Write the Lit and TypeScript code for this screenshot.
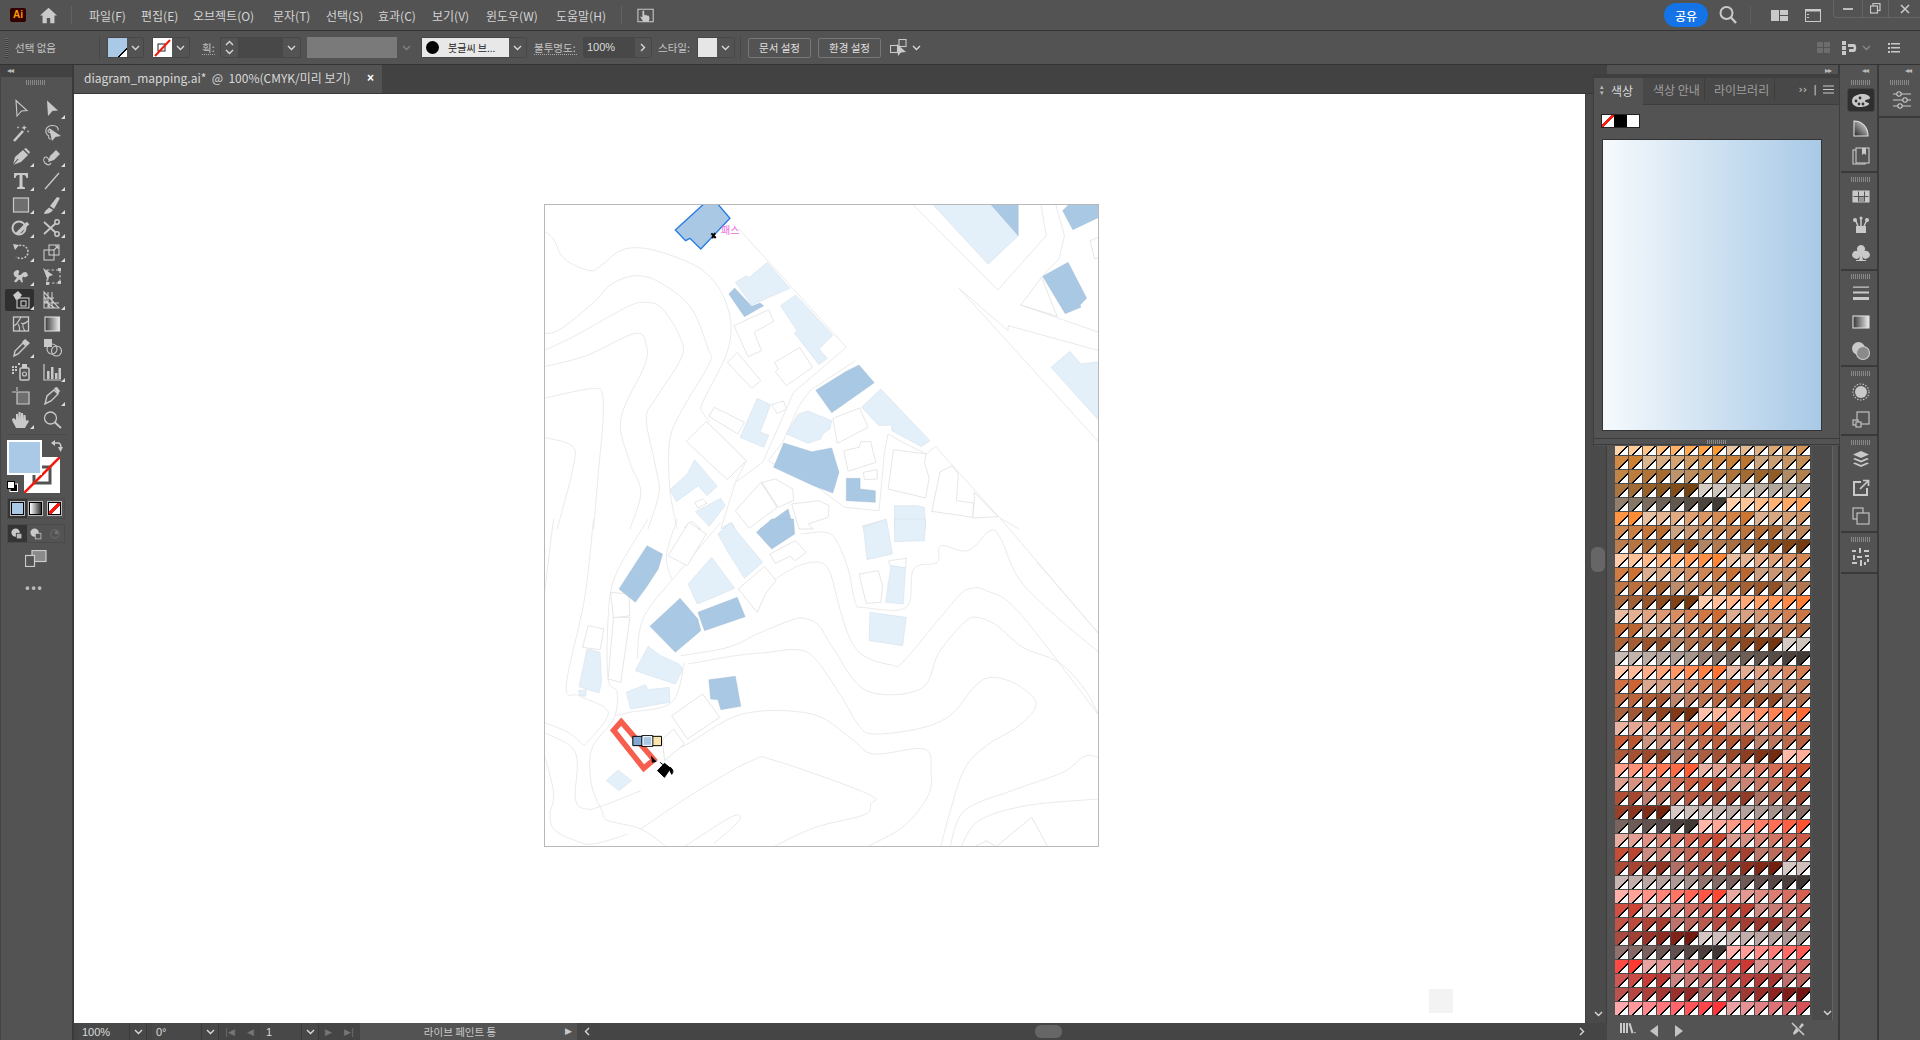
import { LitElement, html, css, svg, TemplateResult } from "lit";
import { customElement } from "lit/decorators.js";

type P = number[];
const smooth = (p: P): string => {
  const pts: [number, number][] = [];
  for (let i = 0; i < p.length; i += 2) pts.push([p[i], p[i + 1]]);
  let d = `M${pts[0][0]} ${pts[0][1]}`;
  for (let i = 0; i < pts.length - 1; i++) {
    const a = pts[Math.max(i - 1, 0)], b = pts[i], c = pts[i + 1], e = pts[Math.min(i + 2, pts.length - 1)];
    d += `C${b[0] + (c[0] - a[0]) / 6} ${b[1] + (c[1] - a[1]) / 6} ${c[0] - (e[0] - b[0]) / 6} ${c[1] - (e[1] - b[1]) / 6} ${c[0]} ${c[1]}`;
  }
  return d;
};

const A_dark = [
  "1240,13 1318,13 1318,110", "1440,35 1460,13 1540,13 1540,55 1468,92",
  "1385,232 1455,190 1506,298 1488,318 1490,325 1447,344", "522,285 538,267 585,322 608,312 618,320 565,353",
  "761,574 845,517 880,498 922,551 805,641", "645,805 673,732 750,758 805,747 825,820 808,882 755,860",
  "845,838 883,838 883,870 925,875 925,910 845,905", "608,990 685,930 700,990",
];
const A_light = [
  "1080,13 1240,13 1318,110 1235,196", "540,250 570,230 577,236 628,190 690,268 585,318",
  "664,320 706,288 808,408 770,450 793,478 770,497 715,420 702,402 710,396",
  "887,625 940,570 1075,725 1052,743 970,695 970,678 935,680", "600,598 637,617 608,700 632,708 618,745 553,715",
  "680,705 713,645 740,636 805,665 800,690 780,705 775,720 740,733", "360,872 408,825 428,782 490,862 462,890 438,860 378,908",
  "430,938 500,898 512,920 468,982", "1408,505 1460,457 1490,495 1540,488 1540,665",
  "978,920 1040,920 1060,925 1063,990 978,990", "890,980 952,962 957,990 892,990", "505,985 530,970 540,990 505,990",
];
const A_out = [
  "536,380 632,332 645,367 592,400 612,455 575,473", "518,490 545,460 610,545 585,568",
  "648,490 680,470 717,445 752,505 680,560 650,518 658,510", "808,658 882,627 905,685 820,733",
  "838,755 880,745 885,728 912,728 926,790 850,817", "405,727 460,667 570,785 518,842", "467,652 482,625 565,670 547,705",
  "640,617 672,606 681,630 655,644", "892,820 930,812 930,840 895,842", "960,870 975,752 1065,765 1060,790 1073,838 1063,897",
  "1080,937 1103,818 1137,800 1153,826 1148,905 1195,912 1193,955", "1193,957 1197,905 1197,880 1262,953", "1325,318 1382,235 1425,352",
  "540,935 610,850 655,925 578,988", "613,850 650,840 698,870 700,905 658,925", "695,915 770,905 798,920 795,955 740,975 755,990 715,990",
  "1515,125 1540,115 1540,175 1528,180", "428,910 450,900 462,912 437,928", "400,985 420,967 445,990",
];
const A_curves: P[] = [
  [13,95,40,120,70,180,140,215,170,200,230,152,310,152,430,200,490,260,520,330,528,400,510,480,450,610,450,640,470,670],
  [13,405,60,390,150,310,200,255,270,230,340,255,420,330,465,450,470,490,400,620,360,720,360,870,380,990],
  [13,455,100,410,240,325,295,310,340,330,390,420,390,480,320,600,295,660,320,800,330,880,300,990],
  [13,503,130,470,265,403,295,440,290,500,225,660,250,790,280,880,250,990],
  [13,598,150,568,175,590,175,680,165,800,150,990], [13,715,90,740,95,800,50,990],
];
const A_lines = [
  "550,90 845,445 700,580 660,680 615,790 540,850 500,990", "870,485 745,575 715,620 670,730 630,785 760,860 840,925 935,935 950,760 960,705 1000,730 1065,765 1090,742",
  "1090,742 1265,955 1320,990", "1025,13 1262,273 1395,110 1380,13", "1155,268 1290,395 1290,380 1540,455", "1155,268 1540,730",
  "1420,13 1445,110 1430,180 1385,230", "1325,318 1540,400", "460,667 570,785 540,850",
];
const B_dark = [
  "220,210 297,80 340,105 328,150 295,205 265,250", "305,322 388,238 437,300 445,335 375,400", "437,280 545,235 567,293 455,335",
  "467,482 540,472 555,562 500,572 492,542 472,540", "598,40 640,0 700,0 703,45 640,90",
];
const B_light = [
  "492,45 525,12 615,130 565,178 520,100", "410,195 475,115 538,208 470,240 435,255", "265,455 300,382 335,410 385,435 395,450 375,495",
  "240,520 292,497 300,512 358,505 360,550 252,570", "110,503 132,390 168,400 172,490 165,522", "108,515 130,512 128,532 112,530",
  "185,785 217,753 255,785 220,815", "892,25 955,0 972,105 902,122", "953,250 968,140 1008,147 1002,255", "910,280 1010,295 1000,380 908,365",
  "978,0 1063,0 1060,65 978,68",
];
const B_out = [
  "355,110 412,10 460,45 408,140", "197,220 247,225 250,290 205,297", "190,480 205,295 250,295 225,490", "120,385 135,320 178,330 168,392",
  "365,590 450,525 497,595 408,660", "340,660 370,630 400,675 345,725", "635,105 705,65 735,100 705,125 690,112 650,133",
  "548,210 620,142 652,185 625,220 600,280", "880,165 933,155 945,200 940,250 900,253", "962,125 1010,118 1008,147 965,140",
  "1255,985 1310,935 1355,895 1400,985", "1195,985 1230,965 1260,985",
];
const B_curves: P[] = [
  [640,195,650,180,715,140,770,130,800,160,830,280,860,370,900,415,970,438,1000,430,1100,300,1160,225,1190,208,1230,215,1320,280,1540,590],
  [390,410,520,385,600,345,690,305,730,298,770,320,810,390,900,515,1050,510,1100,400,1170,310,1205,295,1260,320,1330,385,1430,430,1500,510,1540,590],
  [410,435,540,410,630,400,710,392,760,420,830,530,880,620,920,645,1040,630,1130,590,1200,500,1250,475,1320,500,1367,555,1320,620,1230,680,1170,750,1130,880,1105,983],
  [340,700,400,680,560,585,750,585,860,660,920,705,1060,690,1078,760,1070,830,1005,920,900,985],
  [280,930,430,820,585,725,650,725,905,825,912,855,893,888,760,925,645,983],
  [400,983,530,893,550,905,480,975], [175,880,190,905,280,930,350,983], [30,880,40,930,100,965,150,975,245,945],
  [1160,983,1210,905,1340,860,1540,840], [1540,715,1500,712,1440,760,1300,815,1170,875,1130,983],
  [720,45,790,40,820,70,850,150,870,250,890,265,1010,265,1030,150,1095,130,1105,80,1180,95,1240,35,1270,60,1320,180,1420,290,1540,400],
  [150,0,125,240,75,500,110,530,180,565,185,600,125,680], [300,0,210,170,190,300,190,480,215,520,205,600,145,690,145,800,175,880],
  [13,610,80,640,125,680], [13,640,100,700,100,840,130,870,175,860,280,815], [13,700,40,820,30,880], [40,0,13,240],
  [1270,0,1540,345], [1370,130,1540,345], [500,10,400,140,290,290,270,420], [400,430,365,550,250,580,210,590],
  [380,0,350,110,365,180],
];

const shapes = (d: string[], c: string) => d.map((p) => svg`<polygon class=${c} points=${p}></polygon>`);
const curves = (d: P[]) => d.map((p) => svg`<path class="ln" d=${smooth(p)}></path>`);
const lines = (d: string[]) => d.map((p) => svg`<polyline class="ln" points=${p}></polyline>`);

/* swatch colours, generated in the library's order */
const series: [number[], number[]][] = [
  [[100, 83], [100, 60]], [[60, 77], [60, 50]], [[50, 71], [58, 46]], [[42, 65], [55, 42]], [[38, 58], [58, 36]], [[32, 54], [75, 26]],
  [[18, 80], [12, 60]], [[14, 50], [10, 23]],
];
const swatchColors = (): string[] => {
  const cycles: [number, number][] = [[64, 30], [48, 26], [48, 24], [64, 22], [48, 19], [48, 16], [64, 12], [64, 9], [64, 6], [48, 2], [48, 358]];
  const out: string[] = [];
  for (const [len, h] of cycles) {
    for (let s = 0; s < len / 8; s++) {
      const [a, b] = series[s];
      for (let i = 0; i < 8; i++) {
        const t = i / 7;
        out.push(`hsl(${h},${a[0] + (b[0] - a[0]) * t}%,${a[1] + (b[1] - a[1]) * t}%)`);
      }
    }
  }
  return out.slice(0, 574);
};

const ic = (s: TemplateResult, size = 20) => html`<svg class="ic" viewBox="0 0 20 20" width=${size} height=${size}>${s}</svg>`;
const chev = html`<svg class="chev" viewBox="0 0 9 6" width="9" height="6"><path d="M1 1L4.5 4.5 8 1"></path></svg>`;

const tools: [TemplateResult, boolean][] = [
  [svg`<path d="M5 1.5L16 11.5 10.5 12 6 17Z"/>`, false],
  [svg`<path class="f" d="M5 1.5L16 11.5 10.5 12 6 17Z"/>`, true],
  [svg`<path d="M3 18L12 8" stroke-width="2.6"/><path class="f" d="M13 2l1 2 2 .5-2 1-.6 2-1-2-2-.5 2-1zM17 7l.5 1 1 .4-1 .4-.5 1-.4-1-1-.4 1-.4zM7 3l.5 1 1 .4-1 .4-.5 1-.4-1-1-.4 1-.4z"/>`, false],
  [svg`<path d="M7 13C2 10 3 3 10 2.5c5-.3 7 3 6 5M7 13c-1 2 0 3 2 3"/><circle cx="7.5" cy="8" r="1.5"/><path class="f" d="M7 5L19 13 13.500 14 10 18Z"/>`, false],
  [svg`<path class="f" d="M2 18L4 10 12 3 17 8 10 15Z"/><path class="f" d="M13 2l2-1 4 4-1 2z"/><path d="M2 18L7 12" stroke="#535353"/>`, true],
  [svg`<path class="f" d="M6 15L8 9 14 3 18 7 12 13Z"/><path d="M7 13C3 6 0 13 3 16s5 2 6 0"/>`, true],
  [svg`<path class="f" d="M3 2H17V7H15.500C15 4.500 14 4 11.500 4V15.500L14 16.500V18H6V16.500L8.500 15.500V4C6 4 5 4.500 4.500 7H3Z"/>`, true],
  [svg`<path d="M3 18L17 2" stroke-width="1.3"/>`, true],
  [svg`<rect class="f2" x="2.500" y="3" width="15" height="14"/>`, true],
  [svg`<path class="f" d="M2 19C3 15 5 15 7 12.500L11 15C9 18 5 19 2 19ZM8 11L15 2 18 3 12 14Z"/>`, true],
  [svg`<circle cx="8" cy="10" r="6.500" stroke-width="2"/><path d="M6 16L17 5" stroke-width="3.600"/>`, true],
  [svg`<circle cx="15" cy="4" r="2.200" stroke-width="1.500"/><circle cx="15" cy="16" r="2.200" stroke-width="1.500"/><path d="M2 4L13.500 14.500M2 16L13.500 5.500" stroke-width="1.800"/>`, true],
  [svg`<path d="M5 5C10 1 17 4 17 10S10 18 5 15" stroke-dasharray="2 1.500" stroke-width="1.500"/><path class="f" d="M2 2L8 3 4 8Z"/>`, true],
  [svg`<rect x="2" y="8" width="10" height="10"/><rect x="7" y="3" width="10" height="10"/><path d="M12 8L16 4M13 4H16V7"/>`, true],
  [svg`<path class="f" d="M3 6c2-2 4-3 5-1s-2 3 0 4 3-3 6-3 2 3 3 3-2 3-4 2-2 2-1 5l-2 .5c0-2-1-3-2-3l-3 3-2-1 3-4C3 11 2 8 3 6Z"/>`, true],
  [svg`<path class="f" d="M1 2L11 9 7 10.500 6 15Z"/><rect x="5" y="4" width="13" height="13" stroke-dasharray="2.500 2"/><path class="f" d="M4 16h3v3H4zM16 2h3v3h-3zM16 15h3v3h-3z"/>`, false],
  [svg`<path class="f" d="M2 5L7 1 11 5 8 9 5 10Z"/><rect x="6" y="8" width="12" height="10"/><rect x="10" y="11" width="5" height="5" fill="#2f2f2f"/>`, true],
  [svg`<path d="M2 2V18H17L2 2ZM2 6L8 18M2 11L13 18M6 2V18M10 2V18M2 8H12M2 13H17"/>`, true],
  [svg`<rect x="2.500" y="3" width="15" height="14" stroke-width="1.300"/><path d="M3 12C7 10 8 6 10 3M10 9C13 11 15 9 17 7M7 10C9 13 9 15 8 17M12 10C11 13 13 15 14 17" />`, false],
  [svg`<defs><linearGradient id="tg"><stop offset="0" stop-color="#3a3a3a"/><stop offset="1" stop-color="#eee"/></linearGradient></defs><rect x="3" y="3" width="14.500" height="14" fill="url(#tg)" stroke="#ddd"/>`, false],
  [svg`<path d="M3 18L4 13 12 5 15 8 7 16Z" stroke-width="1.400"/><path class="f" d="M11 4L14 1 19 5 16 8Z"/>`, true],
  [svg`<path class="f" d="M2 1h8v8H2z"/><circle cx="10" cy="11" r="5"/><circle cx="14.500" cy="13" r="5"/>`, false],
  [svg`<path class="f" d="M1 4h2v2H1zM4 4h2v2H4zM1 7h2v2H1zM4 7h2v2H4zM7 1h2v2H7zM1 10h2v2H1z"/><rect x="9" y="6" width="9" height="12" rx="1" stroke-width="1.500"/><path class="f" d="M11 2h5v4h-5z"/><circle cx="13.500" cy="12" r="2"/>`, false],
  [svg`<path d="M2 2V18H19" stroke-width="1.200"/><path class="f" d="M5 9h2.500v8H5zM9 5h2.500v12H9zM13 11h2.500v6H13zM16.500 6H19v11h-2.500z"/>`, true],
  [svg`<path d="M6 1V5M1 6H5" /><path class="f2" d="M6 6H18V18H6Z"/>`, false],
  [svg`<path d="M3 18L5 10 12 4 16 8 9 15Z" stroke-width="1.400"/><path class="f" d="M12 2L15 1 18 5 16 8Z"/>`, true],
  [svg`<path class="f" d="M5 18C4 15 1 12 1 9l2-1 2 2V4h2l.500 5V2h2l.500 7V3h2l.500 7V5h2l.500 6 1-1 2 1c-1 2-3 5-4 7Z"/>`, true],
  [svg`<circle cx="8.500" cy="8" r="6" stroke-width="1.300"/><path d="M13 12.500L19 18" stroke-width="1.800"/>`, false],
];

const dock: [number, TemplateResult][] = [
  [100, svg`<path class="f" fill-rule="evenodd" d="M1 11C1 6 7 4 11 4c5 0 8 2 8 4 0 2-5 1-5 3s5 1 4 3-5 3-9 3-8-2-8-6Z"/><g fill="#333" stroke="none"><circle cx="5" cy="11" r="1.400"/><circle cx="8" cy="14" r="1.400"/><circle cx="12" cy="14" r="1.400"/><circle cx="9" cy="8" r="1.400"/></g>`],
  [128, svg`<defs><linearGradient id="dg" x1="0" y1="1" x2="1" y2="0"><stop offset="0" stop-color="#222"/><stop offset="1" stop-color="#eee"/></linearGradient></defs><path d="M3 3C11 3 17 9 17 18H3Z" fill="url(#dg)" stroke="#ddd"/>`],
  [156, svg`<rect x="2" y="4" width="12" height="14"/><rect x="5" y="2" width="13" height="15" fill="#535353"/><path class="f" d="M11 2h4v7l-2-1.500L11 9Z"/>`],
  [197, svg`<path class="f" d="M2 4h5v5H2zM8 4h5v5H8zM14 4h4v5h-4zM2 10h5v5H2zM14 10h4v5h-4z"/><path d="M2 4H18V15H2Z"/><path d="M8 10h5v5H8z" fill="#999" stroke="none"/>`],
  [225, svg`<path class="f" d="M5 11H15V18H5Z"/><path d="M7 11L4 4M10 11V2M13 11L16 5" stroke-width="1.500"/><circle class="f" cx="4" cy="5" r="2"/><circle class="f" cx="16" cy="5" r="2"/><circle class="f" cx="10" cy="3" r="1.500"/>`],
  [253, svg`<path class="f" d="M10 2a4 4 0 0 1 3.500 6 4 4 0 1 1-2.500 5l1 4h3v1H5v-1h3l1-4a4 4 0 1 1-2.500-5A4 4 0 0 1 10 2Z"/>`],
  [293, svg`<path class="f" d="M2 3.500h16v1.200H2zM2 8.500h16v2H2zM2 14h16v3H2z"/>`],
  [322, svg`<defs><linearGradient id="dh"><stop offset="0" stop-color="#333"/><stop offset="1" stop-color="#eee"/></linearGradient></defs><rect x="2" y="4" width="16" height="12" fill="url(#dh)" stroke="#ddd"/>`],
  [351, svg`<circle class="f" cx="7.500" cy="7.500" r="6.500"/><circle cx="12" cy="12" r="6.500" fill="#8a8a8a" stroke="#ccc"/>`],
  [392, svg`<circle class="f" cx="10" cy="10" r="6"/><circle cx="10" cy="10" r="8" stroke-dasharray="1.500 1.500"/>`],
  [419, svg`<rect x="6" y="3" width="12" height="12"/><rect x="2" y="11" width="5" height="5" fill="#535353"/><rect x="5" y="13" width="5" height="5" fill="#535353"/>`],
  [460, svg`<path class="f" d="M10 8L2 4.500 10 1l8 3.500ZM2 9l2-1 6 2.600L16 8l2 1-8 3.500ZM2 13.500l2-1 6 2.600 6-2.600 2 1L10 17Z"/>`],
  [488, svg`<path d="M10 4H3V17H16V10" stroke-width="2"/><path d="M9 11L17 3M12 2.500H17.500V8" stroke-width="1.700"/>`],
  [516, svg`<rect x="2" y="2" width="10" height="11"/><rect x="6" y="7" width="12" height="11" fill="#535353"/>`],
  [557, svg`<path class="f" d="M1 3h4v2H1zM8 1h2v5H8zM13 3h5v2h-5zM2 8h2v5H2zM6 9h5v2H6zM14 8h4v2h-4zM1 15h5v2H1zM9 13h2v6H9zM13 15h2v3h-2zM16 12h2v3h-2z"/>`],
];
const dockSections: [number, number][] = [[65, 108], [174, 97], [272, 95], [368, 68], [437, 96], [534, 40]];
const grips = [82, 179, 276, 373, 442, 539];

@customElement("app-root")
export class AppRoot extends LitElement {
  static styles = css`
    :host { display: block; width: 1920px; height: 1040px; overflow: hidden; position: relative; background: #535353; color: #cfcfcf;
      font: 11px "Noto Sans CJK KR", "Noto Sans", sans-serif; }
    * { box-sizing: border-box; }
    .ic { display: block; flex: none; fill: none; stroke: #c9c9c9; stroke-width: 1.1; }
    .ic .f { fill: #c9c9c9; stroke: none; }
    .ic .f2 { fill: #6e6e6e; stroke: #c9c9c9; stroke-width: 1.2; }
    .chev { display: block; fill: none; stroke: #d8d8d8; stroke-width: 1.4; }
    .menubar { height: 31px; border-bottom: 1px solid #333; display: flex; align-items: center; position: relative; }
    .logo { width: 16px; height: 14px; margin-left: 10px; background: #330000; border-radius: 2px; color: #ff9a00; font: bold 10px/14px "Liberation Sans", sans-serif; text-align: center; }
    .home { margin-left: 13px; }
    .msep { width: 1px; height: 18px; background: #616161; }
    .msep.a { margin-left: 13px; }
    .menus { margin-left: 17px; display: grid; grid-template-columns: 52px 52px 80px 53px 52px 54px 54px 70px 53px; font-size: 12px; color: #d4d4d4; }
    .msep.b { margin-left: 12px; }
    .hand { margin-left: 15px; }
    .share { margin-left: auto; width: 44px; height: 24px; border-radius: 12px; background: #1473e6; color: #fff; font-size: 12px; font-weight: 500; display: flex; align-items: center; justify-content: center; }
    .search { margin-left: 10px; }
    .msep.c { margin-left: 12px; background: #5f5f5f; }
    .lay { margin-left: 20px; }
    .pan { margin-left: 17px; }
    .win { margin-left: 12px; align-self: flex-start; width: 87px; height: 18px; border: 1px solid #666; border-top: 0; border-right: 0; border-radius: 0 0 0 4px; display: grid; grid-template-columns: 29px 26px 32px; }
    .win > div { display: flex; align-items: center; justify-content: center; border-right: 1px solid #666; }
    .win > div:last-child { border-right: 0; }

    .control { height: 34px; border-bottom: 1px solid #333; display: flex; align-items: center; padding-left: 5px; }
    .cgrip { width: 3px; height: 20px; background: repeating-linear-gradient(0deg, #3c3c3c 0 1px, #6a6a6a 1px 2px); }
    .nosel { margin-left: 7px; width: 83px; color: #c4c4c4; font-size: 10.5px; }
    .csep { width: 1px; height: 24px; background: #484848; }
    .csep.s1 { margin-left: 1px; }
    .grp { height: 21px; border: 1px solid #474747; border-radius: 2px; display: flex; align-items: center; }
    .g-fill { margin-left: 7px; width: 37px; }
    .g-stroke { margin-left: 8px; width: 38px; }
    .sw { width: 19px; height: 19px; flex: none; position: relative; }
    .sw.blue { background: linear-gradient(135deg, #a9c9e6 74%, #000 74% 80%, #fff 80%); }
    .sw.none { background: #fff; }
    .sw svg { position: absolute; inset: 0; }
    .cv { flex: 1; display: flex; justify-content: center; }
    .lab { color: #c4c4c4; font-size: 10.5px; border-bottom: 1px dotted #aaa; line-height: 13px; }
    .lab.w { margin-left: 12px; width: 13px; }
    .spin { margin-left: 5px; width: 81px; }
    .spin .ud { width: 18px; height: 100%; border-right: 1px solid #474747; display: flex; flex-direction: column; justify-content: center; gap: 3px; align-items: center; }
    .spin .fld { width: 44px; height: 100%; background: #484848; }
    .ud .up { transform: scaleY(-1); }
    .gray { margin-left: 6px; width: 90px; height: 21px; background: #7a7a7a; }
    .gcv { width: 18px; display: flex; justify-content: center; opacity: .35; }
    .g-brush { margin-left: 6px; width: 106px; }
    .brushval { width: 87px; height: 19px; background: #e8e8e8; color: #222; font-size: 10px; display: flex; align-items: center; gap: 9px; padding-left: 4px; white-space: nowrap; }
    .dot { width: 13px; height: 13px; border-radius: 50%; background: #000; }
    .lab.op { margin-left: 7px; width: 43px; }
    .g-op { margin-left: 6px; width: 69px; }
    .g-op .val { width: 51px; height: 100%; background: #484848; padding-left: 3px; font: 11px/19px "Liberation Sans", sans-serif; color: #ddd; }
    .nolab { margin-left: 6px; width: 33px; color: #c4c4c4; font-size: 10.5px; }
    .g-style { margin-left: 6px; width: 38px; }
    .sw.lg { background: #e6e6e6; }
    .csep.s2 { margin-left: 5px; }
    .btn { width: 63px; height: 20px; border: 1px solid #777; border-radius: 2px; color: #e0e0e0; font-size: 10.5px; display: flex; align-items: center; justify-content: center; }
    .btn.one { margin-left: 7px; }
    .btn.two { margin-left: 7px; }
    .isoico { margin-left: 9px; }
    .isochev { margin-left: 5px; }
    .rgt { margin-left: auto; display: flex; align-items: center; }
    .rgt .sn { width: 14px; }
    .rgt .ma { margin-left: 11px; }
    .rgt .mc { margin-left: 5px; opacity: .4; }
    .rgt .li { margin-left: 17px; margin-right: 20px; }

    .main { flex: 1; height: 975px; display: flex; }
    .tools { width: 74px; border-right: 2px solid #3a3a3a; border-left: 1px solid #444; flex: none; display: flex; flex-direction: column; }
    .arrows { height: 12px; background: #424242; color: #bbb; font: 8px/12px "DejaVu Sans", sans-serif; letter-spacing: -1px; padding-left: 6px; }
    .grip { width: 20px; height: 5px; background: repeating-linear-gradient(90deg, #888 0 1px, transparent 1px 2px); }
    .tools .grip { margin: 3px 0 0 25px; }
    .tgrid { margin: 12px 0 0 4px; display: grid; grid-template-columns: 31px 31px; grid-auto-rows: 23.9px; }
    .tool { position: relative; display: flex; align-items: center; justify-content: center; }
    .tool.on::before { content: ""; position: absolute; left: 0; top: 1px; right: 2px; bottom: 1px; background: #2f2f2f; border-radius: 2px; }
    .tool svg { position: relative; }
    .tool.tri::after { content: ""; position: absolute; right: 2px; bottom: 2px; border: 2px solid transparent; border-right-color: #ddd; border-bottom-color: #ddd; }
    .tsep { margin: 3px 6px 0 6px; height: 1px; background: #4a4a4a; }
    .fs { position: relative; height: 53px; margin-top: 5px; }
    .fs .fill { position: absolute; left: 6px; top: 0; width: 35px; height: 35px; background: #a9c9e6; border: 2px solid #fff; z-index: 2; }
    .fs .strk { position: absolute; left: 23px; top: 17px; width: 36px; height: 36px; background: #fff; }
    .fs .strk svg { position: absolute; inset: 0; }
    .fs .swap { position: absolute; left: 49px; top: 0; }
    .fs .defl { position: absolute; left: 6px; top: 41px; width: 11px; height: 11px; }
    .modes { margin: 5px 0 0 6px; width: 58px; height: 21px; border: 1px solid #4a4a4a; display: grid; grid-template-columns: repeat(3, 1fr); }
    .modes > div { display: flex; align-items: center; justify-content: center; }
    .modes > .on { background: #353535; }
    .m { width: 13px; height: 13px; border: 1px solid #000; outline: 1px solid #bbb; }
    .m.c { background: #a9c9e6; }
    .m.g { background: linear-gradient(90deg, #fff, #333); }
    .m.n { background: linear-gradient(135deg, #fff 38%, #f01a10 38% 62%, #fff 62%); }
    .modes.dm { margin-top: 5px; height: 19px; }
    .scr { margin: 7px 0 0 24px; }
    .more { margin: 15px 0 0 0; text-align: center; font: bold 12px/12px "Liberation Sans", sans-serif; letter-spacing: 2px; color: #bbb; padding-right: 4px; }

    .center { width: 1533px; flex: none; display: flex; flex-direction: column; }
    .tabrow { height: 29px; background: #424242; display: flex; flex: none; border-bottom: 1px solid #383838; }
    .tab { width: 308px; background: #535353; display: flex; align-items: center; padding: 0 0 3px 10px; font-size: 12px; color: #d8d8d8; white-space: nowrap; }
    .tab .x { margin-left: auto; margin-right: 8px; font: bold 12px "Liberation Sans", sans-serif; color: #fff; }
    .cwrap { height: 929px; display: flex; flex: none; }
    .canvas { width: 1511px; background: #fff; position: relative; flex: none; }
    .board { position: absolute; left: 470px; top: 110px; }
    .board .ln { fill: none; stroke: #e4e4e4; stroke-width: .8; vector-effect: non-scaling-stroke; }
    .board .out { fill: #fff; stroke: #dfdfdf; stroke-width: .8; vector-effect: non-scaling-stroke; }
    .board .dk { fill: #a9c8e3; stroke: #a3bcd0; stroke-width: .4; vector-effect: non-scaling-stroke; }
    .board .lt { fill: #e3f0fa; stroke: #d2dde6; stroke-width: .5; vector-effect: non-scaling-stroke; }
    .board .sel { fill: #a9c8e3; stroke: #2a7de1; stroke-width: 1.4; vector-effect: non-scaling-stroke; }
    .board .red { fill: #fff; stroke: #f65f4e; stroke-width: 5.5; vector-effect: non-scaling-stroke; }
    .board .mk { stroke: #000; stroke-width: 1; vector-effect: non-scaling-stroke; }
    .board .bd { fill: none; stroke: #b8b8b8; stroke-width: 2; }
    .board text { font: 10px "Noto Sans CJK KR", sans-serif; fill: #ec6ce0; }
    .ghost { position: absolute; left: 1355px; top: 895px; width: 24px; height: 24px; background: #f3f3f3; }
    .vbar { width: 22px; background: #4a4a4a; position: relative; border-left: 1px solid #424242; border-right: 1px solid #3d3d3d; }
    .vbar .th { position: absolute; left: 5px; top: 453px; width: 14px; height: 25px; border-radius: 6px; background: #666; }
    .vbar svg { position: absolute; left: 8px; bottom: 6px; }
    .status { flex: 1; display: flex; align-items: center; padding-left: 4px; background: #454545; height: 17px; }
    .st { height: 17px; background: #484848; display: flex; align-items: center; font: 11px "Liberation Sans", sans-serif; color: #ddd; padding-left: 4px; border-right: 1px solid #3a3a3a; }
    .st.a { width: 52px; }
    .st.c { width: 17px; padding-left: 4px; }
    .st.c.gap { margin-right: 5px; }
    .st.b { width: 50px; }
    .st.n { width: 42px; padding-left: 6px; }
    .navs { display: flex; align-items: center; justify-content: space-around; width: 41px; color: #757575; font-size: 9px; font-family: "DejaVu Sans", sans-serif; height: 17px; }
    .st.mid { width: 200px; background: #535353; font: 10.500px "Noto Sans CJK KR", sans-serif; justify-content: center; color: #c9c9c9; border: 0; padding-left: 0; margin-left: 0; }
    .playb { width: 17px; padding-left: 5px; color: #c9c9c9; font: 9px "DejaVu Sans", sans-serif; background: #535353; height: 17px; line-height: 17px; }
    .hscroll { flex: 1; position: relative; height: 17px; color: #aaa; }
    .hscroll .lt { position: absolute; left: 7px; top: 4px; }
    .hscroll .rt { position: absolute; right: 22px; top: 4px; transform: rotate(180deg); }
    .hscroll .th { position: absolute; left: 458px; top: 2px; width: 27px; height: 13px; border-radius: 6px; background: #666; }

    .sidecol { width: 232px; margin-left: 1px; border-right: 2px solid #3a3a3a; flex: none; display: flex; flex-direction: column; }
    .top12 { height: 12px; position: relative; color: #bbb; font: 8px/12px "DejaVu Sans", sans-serif; letter-spacing: -1px; text-align: right; padding-right: 7px; flex: none; }
    .sp { height: 368px; flex: none; }
    .swwrap { flex: 1; display: flex; position: relative; overflow: hidden; }
    .swgrid { margin: -3px 0 0 7px; display: grid; grid-template-columns: repeat(14, 14px); grid-auto-rows: 14px; background: #4a4a4a; height: 574px; width: 196px; }
    .cell { margin: 0 1px 1px 0; background: linear-gradient(135deg, var(--c) 61%, #000 61% 67%, #fff 67%); }
    .swr { position: absolute; left: 204px; top: 0; width: 21px; height: 575px; background: #4b4b4b; border-right: 1px solid #636363; }
    .swr svg { position: absolute; left: 11px; bottom: 4px; }
    .swfoot { position: absolute; left: 0; top: 575px; right: 0; height: 20px; }
    .swfoot .lib { position: absolute; left: 12px; top: 2px; }
    .swfoot .pr { position: absolute; left: 42px; top: 5px; border: 6px solid transparent; border-right: 8px solid #c4c4c4; border-left: 0; }
    .swfoot .nx { position: absolute; left: 67px; top: 5px; border: 6px solid transparent; border-left: 8px solid #c4c4c4; border-right: 0; }
    .swfoot .del { position: absolute; left: 183px; top: 2px; }

    .dock1 { width: 38px; flex: none; margin-left: 1px; position: relative; border-right: 2px solid #3a3a3a; }
    .dock2 { flex: 1; margin-left: 0; position: relative; }
    .top12.d { padding-right: 9px; }
    .sec { position: absolute; left: 0; right: 0; border-bottom: 2px solid #3a3a3a; }
    .dgrip { position: absolute; left: 10px; }
    .dic { position: absolute; left: 10px; }
    .dock2 .dgrip { left: 11px; }
    .act { position: absolute; left: 6px; top: 23px; width: 28px; height: 24px; background: #2f2f2f; border: 1px solid #444; border-radius: 3px; }
    .dock2 .sec { height: 53px; top: 0; }
    .dock2 .dic { left: 13px; top: 25px; }

    .colorp { position: absolute; left: 1593px; top: 74px; width: 247px; height: 372px; background: #535353; border: 1px solid #3e3e3e; border-top: 4px solid #3f3f3f; border-bottom: 0; z-index: 5; }
    .ctabs { height: 27px; display: flex; background: #484848; border-bottom: 1px solid #3d3d3d; font-size: 12px; color: #9e9e9e; padding-bottom: 4px; }
    .ctabs > div { display: flex; align-items: center; border-right: 1px solid #3d3d3d; }
    .ctabs .t1 { width: 49px; background: #535353; color: #dcdcdc; padding: 0 0 4px 6px; gap: 4px; height: 28px; border-right: 0; }
    .ctabs .t2 { width: 62px; padding-left: 10px; white-space: nowrap; }
    .ctabs .t3 { width: 70px; padding-left: 9px; white-space: nowrap; }
    .ctabs .tr { flex: 1; border: 0; gap: 6px; justify-content: flex-end; padding-right: 5px; color: #ccc; font: 11px "DejaVu Sans", sans-serif; }
    .updn { font: 7px/6px "DejaVu Sans", sans-serif; color: #bbb; width: 7px; }
    .mini { margin: 9px 0 0 7px; display: flex; width: 39px; height: 14px; border: 1px solid #222; }
    .mini div { width: 13px; }
    .mini .nn { background: linear-gradient(135deg, #fff 40%, #f02010 40% 55%, #fff 55%); }
    .mini .bk { background: #000; }
    .mini .wh { background: #fff; }
    .ramp { margin: 11px 0 0 8px; width: 220px; height: 292px; background: linear-gradient(90deg, #f6fafd, #a8c9e6); border: 1px solid #333; }
    .cgr { margin-top: 7px; height: 7px; border-top: 1px solid #3a3a3a; border-bottom: 1px solid #3a3a3a; display: flex; justify-content: center; align-items: center; }
    .cgr .grip { height: 4px; }
  `;

  render() {
    return html`
      <div class="menubar">
        <div class="logo">Ai</div>
        <svg class="ic home" viewBox="0 0 20 20" width="19" height="17"><path class="f" d="M10 1L20 10H17V19H12V13H8V19H3V10H0Z"></path></svg>
        <div class="msep a"></div>
        <div class="menus">
          ${["파일(F)", "편집(E)", "오브젝트(O)", "문자(T)", "선택(S)", "효과(C)", "보기(V)", "윈도우(W)", "도움말(H)"].map((m) => html`<div>${m}</div>`)}
        </div>
        <div class="msep b"></div>
        <svg class="ic hand" viewBox="0 0 20 16" width="18" height="15"><path d="M1 1H18V15H1Z" stroke-width="1.200"></path><path class="f" d="M7 15C6 12 3 10 4 9l2 1V3l2-.5V8l1-1 1 1 1-.5 1 1 1-.500 1 3-1 4Z"></path></svg>
        <div class="share">공유</div>
        <span class="search">${ic(svg`<circle cx="8.500" cy="8" r="6" stroke-width="2"></circle><path d="M13 12.500L18 18" stroke-width="2.400"></path>`, 20)}</span>
        <div class="msep c"></div>
        <svg class="ic lay" viewBox="0 0 17 11" width="17" height="11"><path class="f" d="M0 0H8V11H0ZM9 0H17V5H9ZM9 6H17V11H9Z"></path></svg>
        <svg class="ic pan" viewBox="0 0 16 13" width="16" height="13"><path d="M.5.5H15.500V12.500H.5Z"></path><path class="f" d="M.5 .5H15.500V2.500H.5ZM2 5h2v1H2zM2 8h2v1H2z"></path></svg>
        <div class="win">
          <div><svg viewBox="0 0 10 2" width="10" height="2"><rect width="10" height="2" fill="#bdbdbd"></rect></svg></div>
          <div><svg class="ic" viewBox="0 0 11 11" width="11" height="11"><rect x="3" y=".5" width="7" height="7" stroke-width="1.200"></rect><rect x=".5" y="3" width="7" height="7" fill="#535353" stroke-width="1.200"></rect></svg></div>
          <div><svg class="ic" viewBox="0 0 10 10" width="10" height="10"><path d="M1 1L9 9M9 1L1 9" stroke-width="1.600"></path></svg></div>
        </div>
      </div>

      <div class="control">
        <div class="cgrip"></div>
        <div class="nosel">선택 없음</div>
        <div class="csep s1"></div>
        <div class="grp g-fill"><div class="sw blue"></div><div class="cv">${chev}</div></div>
        <div class="grp g-stroke">
          <div class="sw none"><svg viewBox="0 0 19 19" width="19" height="19"><rect x="5" y="6" width="7" height="7" fill="none" stroke="#222"></rect><path d="M2 18L17 2" stroke="#f01a10" stroke-width="2"></path></svg></div>
          <div class="cv">${chev}</div>
        </div>
        <div class="lab w">획:</div>
        <div class="grp spin"><div class="ud"><span class="up">${chev}</span>${chev}</div><div class="fld"></div><div class="cv">${chev}</div></div>
        <div class="gray"></div>
        <div class="gcv">${chev}</div>
        <div class="grp g-brush"><div class="brushval"><span class="dot"></span>붓글씨 브...</div><div class="cv">${chev}</div></div>
        <div class="lab op">불투명도:</div>
        <div class="grp g-op"><div class="val">100%</div><div class="cv"><svg class="chev" viewBox="0 0 6 9" width="6" height="9"><path d="M1 1L4.500 4.500 1 8"></path></svg></div></div>
        <div class="nolab">스타일:</div>
        <div class="grp g-style"><div class="sw lg"></div><div class="cv">${chev}</div></div>
        <div class="csep s2"></div>
        <div class="btn one">문서 설정</div>
        <div class="btn two">환경 설정</div>
        <svg class="ic isoico" viewBox="0 0 17 18" width="17" height="18"><rect x=".5" y="6.500" width="7" height="7"></rect><rect x="9" y=".5" width="7" height="7"></rect><path class="f" d="M7 5L16 13 11 13.500 8 17Z"></path></svg>
        <span class="isochev">${chev}</span>
        <div class="rgt">
          <svg class="ic sn" viewBox="0 0 14 13" width="14" height="13"><path d="M0 1h6v5H0zM7 1h6v5H7zM0 7h6v5H0zM7 7h6v5H7z" fill="#6d6d6d" stroke="none"></path></svg>
          <svg class="ic ma" viewBox="0 0 15 14" width="15" height="14"><path class="f" d="M0 0H4V4H0ZM0 5H4V9H0ZM0 10H4V14H0Z"></path><path d="M6 3H12C15 3 15 11 12 11H7V8H11C12 8 12 6 11 6H6" fill="#c9c9c9" stroke="none"></path></svg>
          <span class="mc">${chev}</span>
          <svg class="ic li" viewBox="0 0 12 10" width="12" height="10"><path class="f" d="M0 0h2v2H0zM3 0h9v1.500H3zM0 4h2v2H0zM3 4h9v1.500H3zM0 8h2v2H0zM3 8h9v1.500H3z"></path></svg>
        </div>
      </div>

      <div class="main">
        <div class="tools">
          <div class="arrows">◂◂</div>
          <div class="grip"></div>
          <div class="tgrid">
            ${tools.map(([s, tri], i) => html`<div class="tool ${tri ? "tri" : ""} ${i === 16 ? "on" : ""}">${ic(s)}</div>`)}
          </div>
          <div class="tsep"></div>
          <div class="fs">
            <div class="fill"></div>
            <div class="strk"><svg viewBox="0 0 36 36" width="36" height="36"><rect x="10" y="10" width="16" height="16" fill="#fff" stroke="#535353" stroke-width="3"></rect><path d="M0 36L36 0" stroke="#f01a10" stroke-width="2.600"></path></svg></div>
            <svg class="ic swap" viewBox="0 0 13 13" width="13" height="13"><path d="M2 3H8C10 3 11 4 11 8" stroke-width="1.600"></path><path class="f" d="M5 0V6L1 3ZM8 7H13L10.500 12Z"></path></svg>
            <svg class="defl" viewBox="0 0 11 11"><rect x="3" y="3" width="7.500" height="7.500" fill="#000" stroke="#fff"></rect><rect x=".5" y=".5" width="7" height="7" fill="#fff" stroke="#000"></rect></svg>
          </div>
          <div class="modes">
            <div class="on"><div class="m c"></div></div><div><div class="m g"></div></div><div><div class="m n"></div></div>
          </div>
          <div class="modes dm">
            <div class="on">${ic(svg`<circle class="f" cx="8" cy="8" r="6"></circle><rect x="9" y="9" width="8" height="8" fill="#bbb" stroke="#353535"></rect>`, 14)}</div>
            <div>${ic(svg`<circle class="f" cx="8" cy="8" r="6"></circle><rect x="9" y="9" width="8" height="8" fill="#535353"></rect>`, 14)}</div>
            <div>${ic(svg`<circle cx="10" cy="10" r="6" stroke="#777"></circle><rect x="10" y="6" width="4" height="4" fill="#777" stroke="none"></rect>`, 14)}</div>
          </div>
          <svg class="ic scr" viewBox="0 0 22 17" width="22" height="17"><rect x="7" y=".5" width="14" height="11" fill="#8a8a8a" stroke="#ccc" stroke-width="1.200"></rect><rect x=".5" y="5.500" width="9" height="11" fill="#535353" stroke="#ccc" stroke-width="1.200"></rect></svg>
          <div class="more">•••</div>
        </div>

        <div class="center">
          <div class="tabrow"><div class="tab">diagram_mapping.ai*&nbsp; @&nbsp; 100%(CMYK/미리 보기)<span class="x">×</span></div></div>
          <div class="cwrap">
            <div class="canvas">
              <svg class="board" viewBox="545 205 555 643" width="555" height="643">
                <g transform="translate(540,200) scale(.36364,.33333)">
                  ${curves(A_curves)}${lines(A_lines)}${shapes(A_out, "out")}${shapes(A_light, "lt")}${shapes(A_dark, "dk")}
                  <polygon class="sel" points="455,13 490,13 525,58 445,150 415,118 403,125 375,93"></polygon>
                  <path d="M474 103L486 117M484 102L476 118" stroke="#000" stroke-width="2" vector-effect="non-scaling-stroke"></path>
                </g>
                <g transform="translate(540,520) scale(.36364,.33333)">
                  ${curves(B_curves)}${shapes(B_out, "out")}${shapes(B_light, "lt")}${shapes(B_dark, "dk")}
                  <polygon class="red" points="226,608 316,722 288,748 205,634"></polygon>
                  <rect class="mk" x="258" y="652" width="26" height="28" fill="#82a9d4"></rect>
                  <rect class="mk" x="312" y="652" width="25" height="28" fill="#fde6ae"></rect>
                  <rect class="mk" x="283" y="650" width="30" height="32" fill="#a9c8e3" stroke-width="1.200"></rect>
                  <rect x="286" y="653" width="24" height="26" fill="none" stroke="#fff" stroke-width="1" vector-effect="non-scaling-stroke"></rect>
                  <path d="M308 710L324 728 311 731Z" fill="#000"></path>
                  <path d="M326 755L345 733 362 748 345 775ZM360 745C370 750 370 760 365 766L360 755ZM333 730L342 738" fill="#000" stroke="#000" vector-effect="non-scaling-stroke"></path>
                </g>
                <text x="722" y="235">패스</text>
                <rect class="bd" x="545" y="205" width="555" height="643"></rect>
              </svg>
              <div class="ghost"></div>
            </div>
            <div class="vbar"><div class="th"></div>${chev}</div>
          </div>
          <div class="status">
            <div class="st a">100%</div><div class="st c gap">${chev}</div>
            <div class="st b">0°</div><div class="st c">${chev}</div>
            <div class="navs"><span>|◀</span><span>◀</span></div>
            <div class="st n">1</div><div class="st c">${chev}</div>
            <div class="navs"><span>▶</span><span>▶|</span></div>
            <div class="st mid">라이브 페인트 통</div>
            <div class="playb">▶</div>
            <div class="hscroll">
              <svg class="chev lt" viewBox="0 0 6 9" width="6" height="9"><path d="M5 1L1.500 4.500 5 8"></path></svg>
              <div class="th"></div>
              <svg class="chev rt" viewBox="0 0 6 9" width="6" height="9"><path d="M5 1L1.500 4.500 5 8"></path></svg>
            </div>
          </div>
        </div>

        <div class="sidecol">
          <div class="top12">▸▸</div>
          <div class="sp"></div>
          <div class="swwrap">
            <div class="swgrid">
              ${swatchColors().map((c) => html`<div class="cell" style="--c:${c}"></div>`)}
            </div>
            <div class="swr">${chev}</div>
            <div class="swfoot">
              <svg class="ic lib" viewBox="0 0 16 12" width="16" height="12"><path class="f" d="M0 1h2v10H0zM3 1h2v10H3zM6 1h2v10H6zM8.500 1.500l2-.5 3 10-2 .5zM14 10h2l-1 1.500z"></path></svg>
              <div class="pr"></div><div class="nx"></div>
              <svg class="ic del" viewBox="0 0 14 14" width="14" height="14"><path d="M1 1L13 13" stroke-width="1.600"></path><path class="f" d="M8 5L11 1 13 3 9 7ZM2 11L5 6 8 9 3 13Z"></path></svg>
            </div>
          </div>
        </div>

        <div class="dock1">
          <div class="top12 d">◂◂</div>
          ${dockSections.map(([t, h]) => html`<div class="sec" style="top:${t - 65}px;height:${h}px"></div>`)}
          ${grips.map((g) => html`<div class="grip dgrip" style="top:${g - 65 - 2}px"></div>`)}
          <div class="act"></div>
          ${dock.map(([y, s]) => html`<div class="dic" style="top:${y - 65 - 10}px">${ic(s)}</div>`)}
        </div>
        <div class="dock2">
          <div class="top12 d">◂◂</div>
          <div class="sec"></div>
          <div class="grip dgrip" style="top:${82 - 65 - 2}px"></div>
          <div class="dic">${ic(svg`<path d="M1 4H19M1 10H19M1 16H19"></path><circle cx="7" cy="4" r="2.200" fill="#535353"></circle><circle cx="13" cy="10" r="2.200" fill="#535353"></circle><circle cx="8" cy="16" r="2.200" fill="#535353"></circle>`)}</div>
        </div>
      </div>

      <div class="colorp">
        <div class="ctabs">
          <div class="t1"><span class="updn">▴<br />▾</span>색상</div>
          <div class="t2">색상 안내</div>
          <div class="t3">라이브러리</div>
          <div class="tr"><span>››</span><span>|</span><svg class="ic" viewBox="0 0 11 9" width="11" height="9"><path d="M0 1H11M0 4.500H11M0 8H11"></path></svg></div>
        </div>
        <div class="mini"><div class="nn"></div><div class="bk"></div><div class="wh"></div></div>
        <div class="ramp"></div>
        <div class="cgr"><div class="grip"></div></div>
      </div>
    `;
  }
}
